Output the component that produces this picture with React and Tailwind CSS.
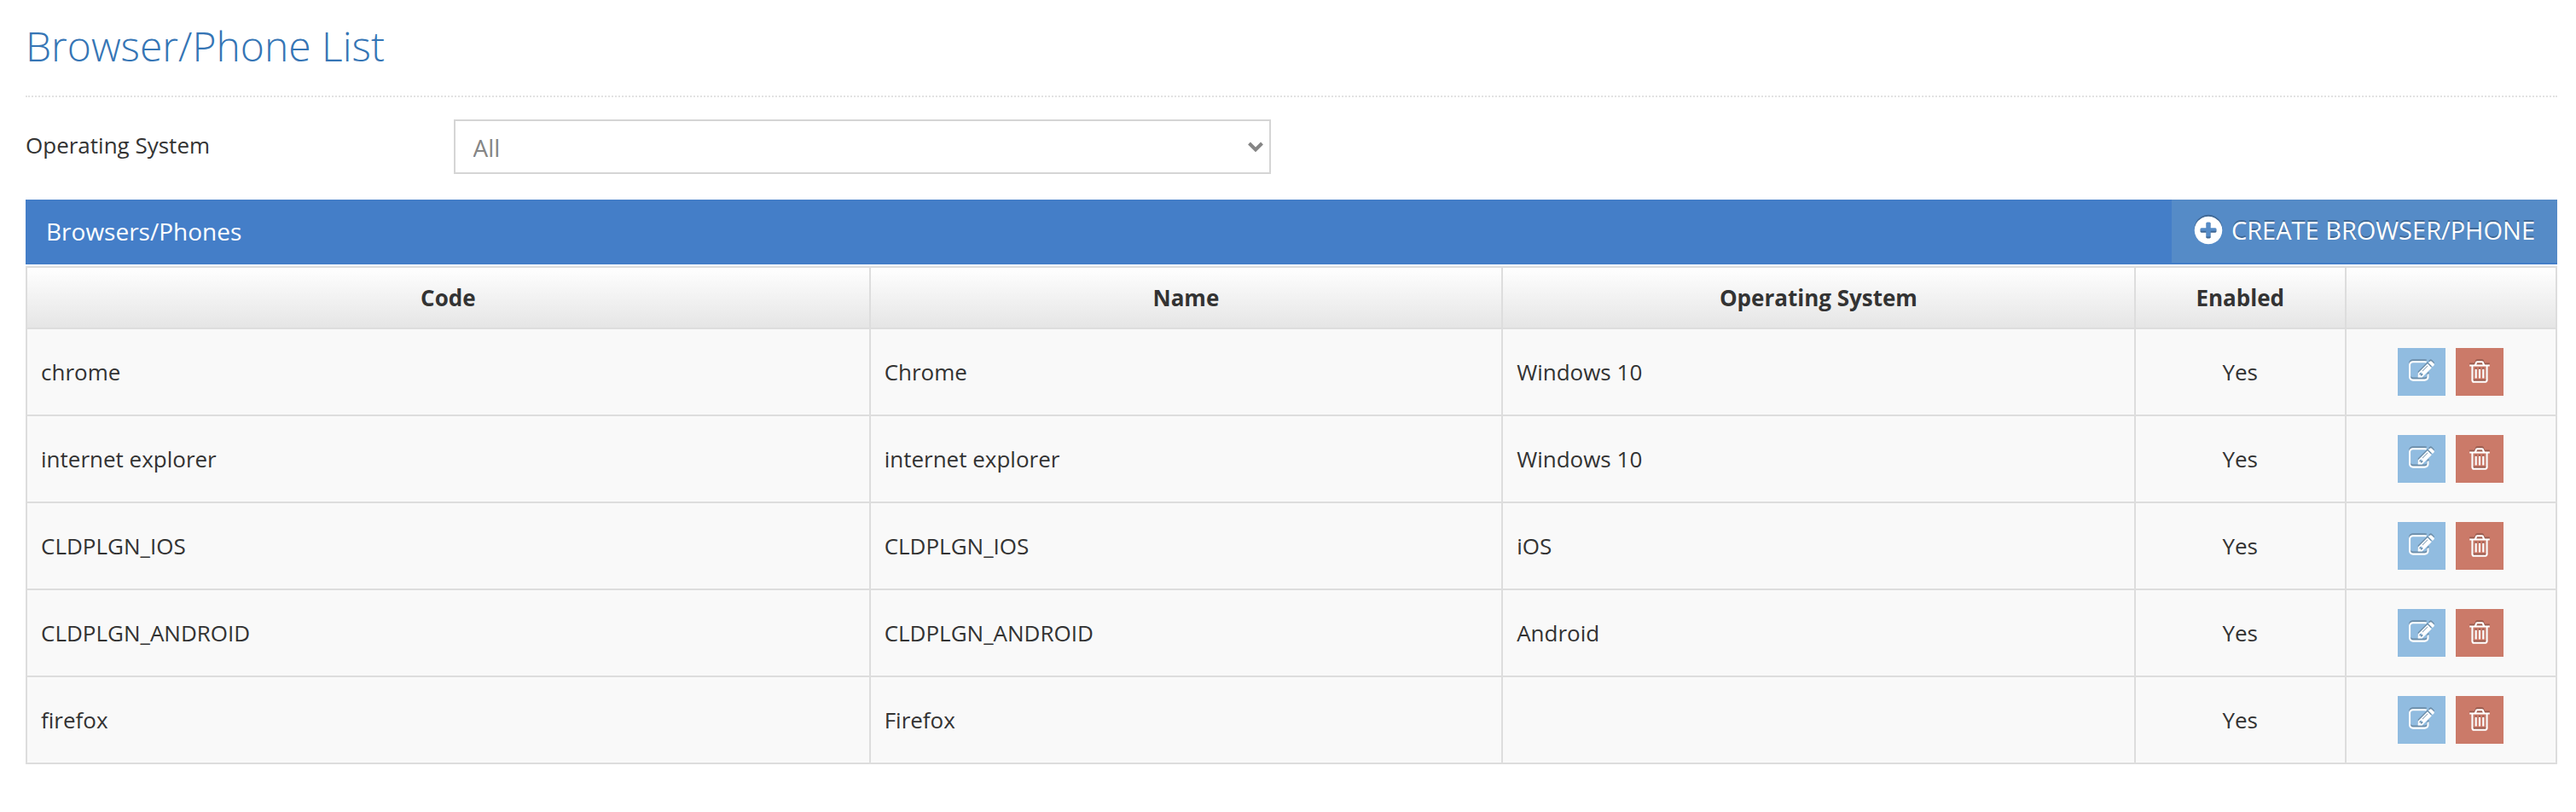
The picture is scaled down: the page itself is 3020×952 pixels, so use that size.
const ICONS = {
  plus: "M1344 960v-128q0-26-19-45t-45-19h-256v-256q0-26-19-45t-45-19h-128q-26 0-45 19t-19 45v256h-256q-26 0-45 19t-19 45v128q0 26 19 45t45 19h256v256q0 26 19 45t45 19h128q26 0 45-19t19-45v-256h256q26 0 45-19t19-45zm320-64q0 209-103 385.5t-279.5 279.5-385.5 103-385.5-103-279.5-279.5-103-385.5 103-385.5 279.5-279.5 385.5-103 385.5 103 279.5 279.5 103 385.5z",
  edit: "M888 1184l116-116-152-152-116 116v56h96v96h56zm440-720q-16-16-33 1l-350 350q-17 17-1 33t33-1l350-350q17-17 1-33zm80 594v190q0 119-84.5 203.5t-203.5 84.5h-832q-119 0-203.5-84.5t-84.5-203.5v-832q0-119 84.5-203.5t203.5-84.5h832q63 0 117 25 15 7 18 23 3 17-9 29l-49 49q-14 14-32 8-23-6-45-6h-832q-66 0-113 47t-47 113v832q0 66 47 113t113 47h832q66 0 113-47t47-113v-126q0-13 9-22l64-64q15-15 35-7t20 29zm-96-738l288 288-672 672h-288v-288zm444 132l-92 92-288-288 92-92q28-28 68-28t68 28l152 152q28 28 28 68t-28 68z",
  trash: "M704 736v576q0 14-9 23t-23 9h-64q-14 0-23-9t-9-23v-576q0-14 9-23t23-9h64q14 0 23 9t9 23zm256 0v576q0 14-9 23t-23 9h-64q-14 0-23-9t-9-23v-576q0-14 9-23t23-9h64q14 0 23 9t9 23zm256 0v576q0 14-9 23t-23 9h-64q-14 0-23-9t-9-23v-576q0-14 9-23t23-9h64q14 0 23 9t9 23zm128 724v-948h-896v948q0 22 7 40.5t14.5 27 10.5 8.5h832q3 0 10.5-8.5t14.5-27 7-40.5zm-672-1076h448l-48-117q-7-9-17-11h-317q-10 2-17 11zm928 32v64q0 14-9 23t-23 9h-96v948q0 83-47 143.5t-113 60.5h-832q-66 0-113-58.5t-47-141.5v-952h-96q-14 0-23-9t-9-23v-64q0-14 9-23t23-9h309l70-167q15-37 54-63t79-26h320q40 0 79 26t54 63l70 167h309q14 0 23 9t9 23z",
};

function Icon({ name, className }) {
  return (
    <svg
      viewBox="0 0 1792 1792"
      aria-hidden="true"
      fill="currentColor"
      className={`shrink-0 overflow-visible drop-shadow-[0_-2px_0_rgba(0,0,0,0.25)] ${className}`}
    >
      <path d={ICONS[name]} />
    </svg>
  );
}

const ROWS = [
  ["chrome", "Chrome", "Windows 10", "Yes"],
  ["internet explorer", "internet explorer", "Windows 10", "Yes"],
  ["CLDPLGN_IOS", "CLDPLGN_IOS", "iOS", "Yes"],
  ["CLDPLGN_ANDROID", "CLDPLGN_ANDROID", "Android", "Yes"],
  ["firefox", "Firefox", "", "Yes"],
];

const COLUMNS = [
  { label: "Code", width: "w-4/12" },
  { label: "Name", width: "w-3/12" },
  { label: "Operating System", width: "w-3/12" },
  { label: "Enabled", width: "w-1/12" },
  { label: "", width: "w-1/12" },
];

export default function App() {
  return (
    <main className="min-h-screen bg-white pt-[22px] pr-[22px] pb-14 pl-[30px] font-['Open_Sans',sans-serif] text-[26px] leading-9 text-[#333]">
      <h1 className="border-b-2 border-dotted border-[#e2e2e2] pb-[26px] text-[48px] leading-[64px] font-light text-[#3575b5]">
        Browser/Phone List
      </h1>

      <div className="mt-[26px] flex items-center">
        <label htmlFor="os" className="w-[16.9%] pb-1">
          Operating System
        </label>
        <div className="relative w-[32.3%]">
          <select
            id="os"
            defaultValue="all"
            className="block h-16 w-full appearance-none rounded-none border-2 border-[#d5d5d5] bg-white pt-0.5 pr-12 pl-[21px] text-[28px] text-[#858585]"
          >
            <option value="all">All</option>
            <option value="windows">Windows 10</option>
            <option value="ios">iOS</option>
            <option value="android">Android</option>
          </select>
          <svg
            viewBox="0 0 18 12"
            aria-hidden="true"
            className="pointer-events-none absolute top-[26px] right-[9px] h-3 w-[18px]"
          >
            <path d="M1.5 2 9 9.5 16.5 2" fill="none" stroke="#858585" strokeWidth="4" />
          </svg>
        </div>
      </div>

      <section className="mt-[30px]">
        <div className="flex h-[76px] justify-between bg-[#447ec8] pb-0.5 text-[28px] text-white">
          <h2 className="flex items-center pl-6">Browsers/Phones</h2>
          <button
            type="button"
            className="flex items-center gap-2 bg-[#558bc7] pr-[26px] pb-0.5 pl-6 text-[29px] uppercase [text-shadow:0_-2px_0_rgba(0,0,0,0.25)]"
          >
            <Icon name="plus" className="size-[38px]" />
            Create Browser/Phone
          </button>
        </div>

        <table className="mt-0.5 w-full table-fixed border-collapse bg-[#f9f9f9]">
          <thead>
            <tr className="h-[72px] bg-linear-to-b from-white to-[#e5e5e5]">
              {COLUMNS.map((column, i) => (
                <th key={i} className={`border-2 border-[#ddd] font-bold ${column.width}`}>
                  {column.label}
                </th>
              ))}
            </tr>
          </thead>
          <tbody>
            {ROWS.map(([code, name, os, enabled]) => (
              <tr key={code} className="h-[102px]">
                <td className="border-2 border-[#ddd] px-4">{code}</td>
                <td className="border-2 border-[#ddd] px-4">{name}</td>
                <td className="border-2 border-[#ddd] px-4">{os}</td>
                <td className="border-2 border-[#ddd] px-4 text-center">{enabled}</td>
                <td className="border-2 border-[#ddd] px-4">
                  <div className="flex justify-center gap-3">
                    <button
                      type="button"
                      aria-label={`Edit ${name}`}
                      className="flex size-14 items-center justify-center bg-[#91bce0] text-white"
                    >
                      <Icon name="edit" className="size-[30px]" />
                    </button>
                    <button
                      type="button"
                      aria-label={`Delete ${name}`}
                      className="flex size-14 items-center justify-center bg-[#cb7a69] text-white"
                    >
                      <Icon name="trash" className="size-[30px]" />
                    </button>
                  </div>
                </td>
              </tr>
            ))}
          </tbody>
        </table>
      </section>
    </main>
  );
}
